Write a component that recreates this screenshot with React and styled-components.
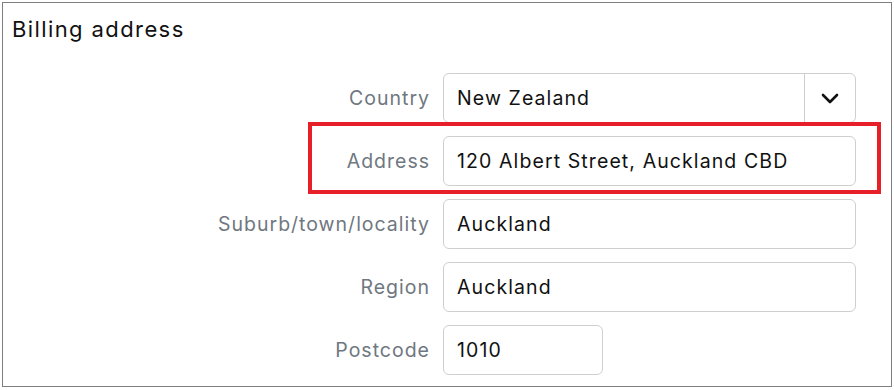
import React from "react";
import styled, { createGlobalStyle } from "styled-components";

const GlobalStyle = createGlobalStyle`
  body {
    margin: 0;
    background: #ffffff;
    font-family: Inter, "Noto Sans", sans-serif;
  }
`;

const Panel = styled.section`
  box-sizing: border-box;
  width: 890px;
  height: 385px;
  margin: 2px;
  border: 1px solid #7f7f7f;
  background: #fff;
`;

const Title = styled.h2`
  margin: 0;
  padding: 13px 0 0 9px;
  font-size: 22px;
  font-weight: 400;
  line-height: 27px;
  letter-spacing: 1.4px;
  color: #111;
`;

const Form = styled.div`
  display: grid;
  grid-template-columns: 427px 413px;
  column-gap: 13px;
  row-gap: 13px;
  margin-top: 30px;
`;

const Row = styled.div`
  display: contents;
`;

const Label = styled.label`
  display: flex;
  align-items: center;
  justify-content: flex-end;
  height: 50px;
  font-size: 19.5px;
  letter-spacing: 1px;
  color: #6f7780;
  position: relative;

  ${(p) =>
    p.$highlight &&
    `
    &::after {
      content: "";
      position: absolute;
      left: 305px;
      top: -14px;
      width: 565px;
      height: 64px;
      border: 4px solid #e61f29;
      pointer-events: none;
    }
  `}
`;

const Field = styled.div`
  box-sizing: border-box;
  display: flex;
  align-items: center;
  height: 50px;
  width: ${(p) => p.$width || "413px"};
  border: 1px solid #cfcfcf;
  border-radius: 6px;
  background: #fff;
  overflow: hidden;
`;

const Value = styled.span`
  flex: 1;
  padding-left: 13px;
  font-size: 19.5px;
  letter-spacing: 1.1px;
  color: #111;
  white-space: nowrap;
`;

const Caret = styled.div`
  display: flex;
  align-items: center;
  justify-content: center;
  width: 50px;
  height: 100%;
  border-left: 1px solid #cfcfcf;
`;

const fields = [
  { label: "Country", value: "New Zealand", select: true },
  { label: "Address", value: "120 Albert Street, Auckland CBD", highlight: true },
  { label: "Suburb/town/locality", value: "Auckland" },
  { label: "Region", value: "Auckland" },
  { label: "Postcode", value: "1010", width: "160px" },
];

export default function App() {
  return (
    <>
      <GlobalStyle />
      <Panel>
        <Title>Billing address</Title>
        <Form>
          {fields.map((f) => (
            <Row key={f.label}>
              <Label $highlight={f.highlight}>{f.label}</Label>
              <Field $width={f.width}>
                <Value>{f.value}</Value>
                {f.select && (
                  <Caret>
                    <svg width="18" height="11" viewBox="0 0 18 11">
                      <path
                        d="M2 2 L9 9 L16 2"
                        fill="none"
                        stroke="#111"
                        strokeWidth="2.6"
                        strokeLinecap="round"
                        strokeLinejoin="round"
                      />
                    </svg>
                  </Caret>
                )}
              </Field>
            </Row>
          ))}
        </Form>
      </Panel>
    </>
  );
}
